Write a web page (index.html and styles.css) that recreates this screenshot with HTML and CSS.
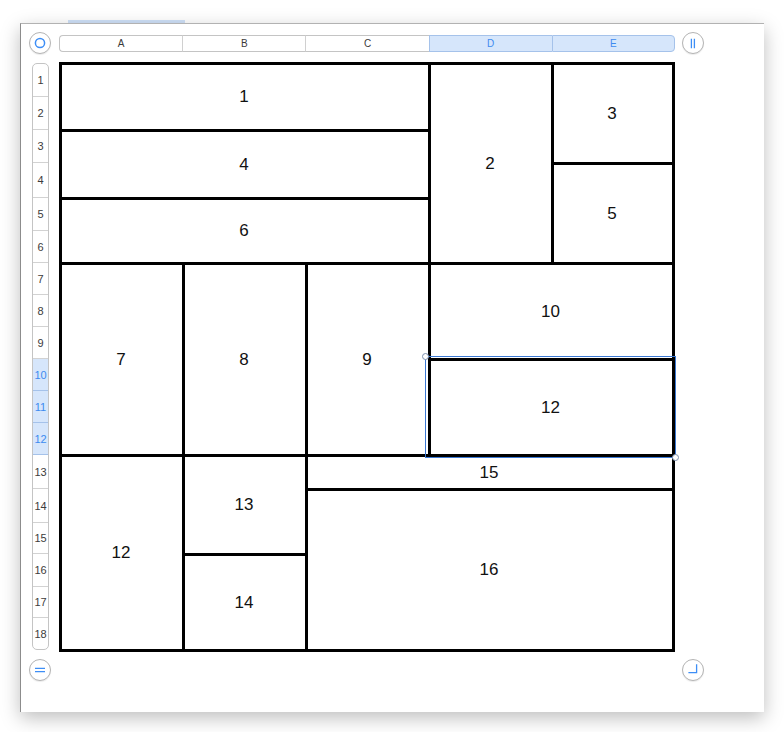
FILE: index.html
```html
<!DOCTYPE html>
<html lang="en">
<head>
<meta charset="utf-8">
<title>Layout grid</title>
<link rel="stylesheet" href="styles.css">
</head>
<body>
<div class="backdrop-tab"></div>
<div class="window">
  <div class="round-btn btn-tl">
    <svg viewBox="0 0 20 20" width="20" height="20"><circle cx="10" cy="10" r="4.6" fill="none" stroke="#3d8ef6" stroke-width="1.5"/></svg>
  </div>
  <div class="col-header">
    <div class="col-cell">A</div>
    <div class="col-cell">B</div>
    <div class="col-cell">C</div>
    <div class="col-cell sel">D</div>
    <div class="col-cell sel">E</div>
  </div>
  <div class="round-btn btn-tr">
    <svg viewBox="0 0 20 20" width="20" height="20"><path d="M8.4 5.8V15.2M11.4 5.8V15.2" fill="none" stroke="#3d8ef6" stroke-width="1.3"/></svg>
  </div>
  <div class="row-header">
    <div class="row-cell">1</div>
    <div class="row-cell">2</div>
    <div class="row-cell">3</div>
    <div class="row-cell">4</div>
    <div class="row-cell">5</div>
    <div class="row-cell">6</div>
    <div class="row-cell">7</div>
    <div class="row-cell">8</div>
    <div class="row-cell">9</div>
    <div class="row-cell sel">10</div>
    <div class="row-cell sel">11</div>
    <div class="row-cell sel">12</div>
    <div class="row-cell">13</div>
    <div class="row-cell">14</div>
    <div class="row-cell">15</div>
    <div class="row-cell">16</div>
    <div class="row-cell">17</div>
    <div class="row-cell last">18</div>
  </div>
  <div class="layout-grid">
    <div class="cell c1">1</div>
    <div class="cell c2">2</div>
    <div class="cell c3">3</div>
    <div class="cell c4">4</div>
    <div class="cell c5">5</div>
    <div class="cell c6">6</div>
    <div class="cell c7">7</div>
    <div class="cell c8">8</div>
    <div class="cell c9">9</div>
    <div class="cell c10">10</div>
    <div class="cell c12a">12</div>
    <div class="cell c12b">12</div>
    <div class="cell c13">13</div>
    <div class="cell c14">14</div>
    <div class="cell c15">15</div>
    <div class="cell c16">16</div>
  </div>
  <div class="round-btn btn-bl">
    <svg viewBox="0 0 20 20" width="20" height="20"><path d="M5 8.3H15M5 11.7H15" fill="none" stroke="#3d8ef6" stroke-width="1.3"/></svg>
  </div>
  <div class="round-btn btn-br">
    <svg viewBox="0 0 20 20" width="20" height="20"><path d="M5.4 12.6H13.6V4.2" fill="none" stroke="#3d8ef6" stroke-width="1.3"/></svg>
  </div>
  <div class="selection">
    <span class="handle handle-tl"></span>
    <span class="handle handle-br"></span>
  </div>
</div>
</body>
</html>
```
FILE: styles.css
```css
html, body {
  margin: 0;
  padding: 0;
  background: #ffffff;
}
body {
  width: 784px;
  height: 732px;
  overflow: hidden;
  font-family: "Liberation Sans", Helvetica, Arial, sans-serif;
}
.backdrop-tab {
  margin-left: 68px;
  margin-top: 20px;
  width: 117px;
  height: 3px;
  background: #cfe1f8;
}
.window {
  position: relative;
  margin-left: 20px;
  width: 744px;
  height: 689px;
  box-sizing: border-box;
  background: #ffffff;
  border-top: 1px solid #b2b2b2;
  border-left: 1px solid #8c8c8c;
  box-shadow: 0 6px 18px rgba(0, 0, 0, 0.26);
  padding: 8px 0 0 8px;
  display: grid;
  grid-template-columns: 22px 8px 616px 7px 22px;
  grid-template-rows: 22px 8px 590px 7px 22px;
}
.round-btn {
  width: 22px;
  height: 22px;
  box-sizing: border-box;
  border: 1px solid #b4b4b4;
  border-radius: 50%;
  background: #ffffff;
  box-shadow: 0 1px 1px rgba(0, 0, 0, 0.08);
}
.round-btn svg {
  display: block;
}
.btn-tl { grid-column: 1; grid-row: 1; }
.btn-tr { grid-column: 5; grid-row: 1; }
.btn-bl { grid-column: 1; grid-row: 5; }
.btn-br { grid-column: 5; grid-row: 5; }

.col-header {
  grid-column: 3;
  grid-row: 1;
  align-self: start;
  margin-top: 3px;
  height: 17px;
  display: grid;
  grid-template-columns: repeat(5, 1fr);
}
.col-cell {
  box-sizing: border-box;
  height: 17px;
  border-top: 1px solid #c4c4c4;
  border-bottom: 1px solid #c4c4c4;
  border-left: 1px solid #d0d0d0;
  background: #ffffff;
  font-size: 10px;
  line-height: 15px;
  text-align: center;
  color: #3a3a3a;
}
.col-cell:first-child {
  border-left: 1px solid #c4c4c4;
  border-radius: 4px 0 0 4px;
}
.col-cell.sel {
  background: #d6e6fb;
  color: #3d8bf0;
  border-color: #a5c2ea;
}
.col-cell:last-child {
  border-right: 1px solid #a5c2ea;
  border-radius: 0 4px 4px 0;
}

.row-header {
  grid-column: 1;
  grid-row: 3;
  justify-self: start;
  align-self: start;
  margin-left: 3px;
  margin-top: 1px;
  width: 17px;
  height: 587px;
  box-sizing: border-box;
  border: 1px solid #c4c4c4;
  border-radius: 5px;
  overflow: hidden;
  display: grid;
  grid-template-rows: 33px 33px 33px 35px 33px 32px 32px 32px 32px 32px 32px 32px 34px 34px 31px 33px 31px 31px;
}
.row-cell {
  box-sizing: border-box;
  border-bottom: 1px solid #d2d2d2;
  font-size: 11px;
  color: #3c3c3c;
  display: flex;
  align-items: center;
  justify-content: center;
}
.row-cell.last {
  border-bottom: none;
}
.row-cell.sel {
  background: #d6e6fb;
  color: #3d8bf0;
  border-bottom-color: #a5c2ea;
}

.layout-grid {
  grid-column: 3;
  grid-row: 3;
  background: #000000;
  padding: 3px;
  display: grid;
  gap: 3px;
  grid-template-columns: 120px 120px 120px 120px 118px;
  grid-template-rows: 31px 30px 30px 32px 30px 29px 29px 29px 29px 29px 29px 29px 31px 31px 28px 30px 28px 29px;
}
.cell {
  background: #ffffff;
  display: flex;
  align-items: center;
  justify-content: center;
  padding-right: 2px;
  font-size: 17px;
  color: #111111;
}
.c1 { grid-column: 1 / 4; grid-row: 1 / 3; }
.c2 { grid-column: 4 / 5; grid-row: 1 / 7; }
.c3 { grid-column: 5 / 6; grid-row: 1 / 4; }
.c4 { grid-column: 1 / 4; grid-row: 3 / 5; }
.c5 { grid-column: 5 / 6; grid-row: 4 / 7; }
.c6 { grid-column: 1 / 4; grid-row: 5 / 7; }
.c7 { grid-column: 1 / 2; grid-row: 7 / 13; }
.c8 { grid-column: 2 / 3; grid-row: 7 / 13; }
.c9 { grid-column: 3 / 4; grid-row: 7 / 13; }
.c10 { grid-column: 4 / 6; grid-row: 7 / 10; }
.c12a { grid-column: 4 / 6; grid-row: 10 / 13; }
.c12b { grid-column: 1 / 2; grid-row: 13 / 19; }
.c13 { grid-column: 2 / 3; grid-row: 13 / 16; }
.c14 { grid-column: 2 / 3; grid-row: 16 / 19; }
.c15 { grid-column: 3 / 6; grid-row: 13 / 14; }
.c16 { grid-column: 3 / 6; grid-row: 14 / 19; }

.selection {
  position: absolute;
  left: 404px;
  top: 332px;
  width: 251px;
  height: 102px;
  box-sizing: border-box;
  border: 1px solid #3a78d2;
  pointer-events: none;
}
.handle {
  position: absolute;
  width: 7px;
  height: 7px;
  box-sizing: border-box;
  border: 1px solid #7b8fae;
  border-radius: 50%;
  background: #ffffff;
}
.handle-tl { left: -4px; top: -4px; }
.handle-br { right: -4px; bottom: -4px; }
```
